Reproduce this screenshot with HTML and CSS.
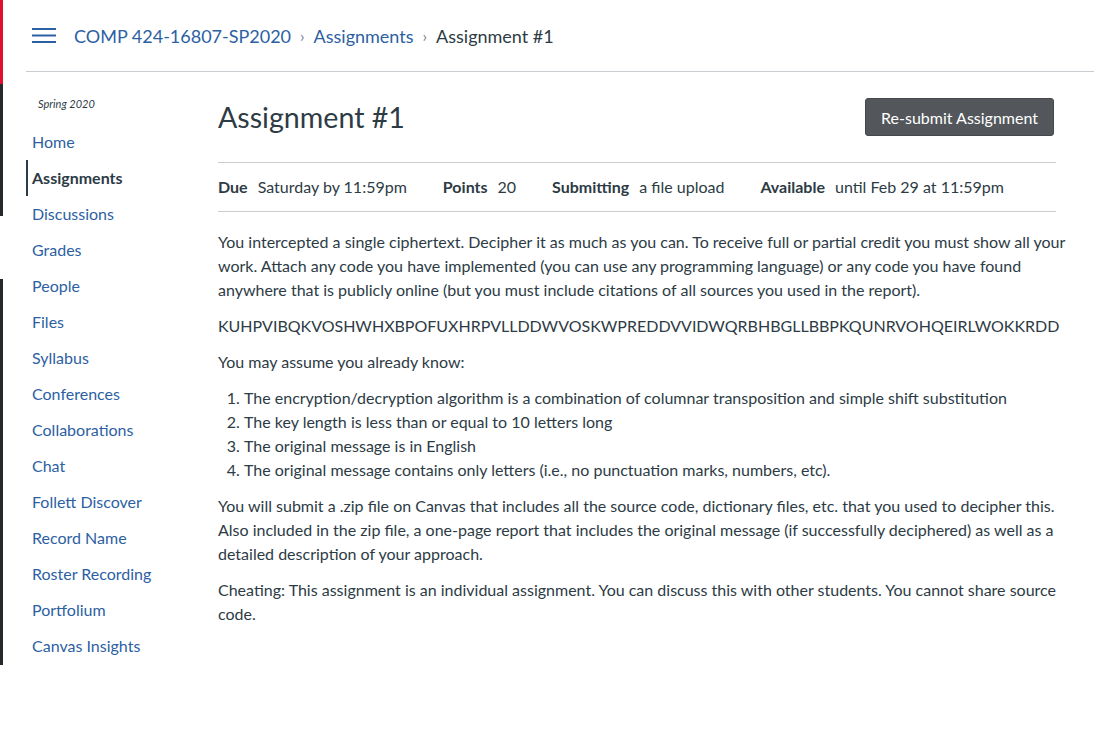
FILE: index.html
```html
<!DOCTYPE html>
<html lang="en">
<head>
<meta charset="utf-8">
<title>Assignment #1</title>
<link rel="stylesheet" href="styles.css">
</head>
<body>
<div class="edge">
  <div class="edge-red"></div>
  <div class="edge-dark edge-a"></div>
  <div class="edge-gap"></div>
  <div class="edge-dark edge-b"></div>
</div>
<div class="app">
  <header class="topbar">
    <svg class="burger" width="24" height="16" viewBox="0 0 24 16">
      <rect x="0" y="0" width="24" height="2" fill="#2d5fa3"/>
      <rect x="0" y="6.5" width="24" height="2" fill="#2d5fa3"/>
      <rect x="0" y="13" width="24" height="2" fill="#2d5fa3"/>
    </svg>
    <nav class="crumbs">
      <a class="crumb-link" href="#">COMP 424-16807-SP2020</a>
      <span class="crumb-sep">›</span>
      <a class="crumb-link" href="#">Assignments</a>
      <span class="crumb-sep">›</span>
      <span class="crumb-current">Assignment #1</span>
    </nav>
  </header>
  <div class="layout">
    <aside class="sidenav">
      <div class="term">Spring 2020</div>
      <ul class="navlist">
        <li><a class="navlink" href="#">Home</a></li>
        <li><a class="navlink active" href="#">Assignments</a></li>
        <li><a class="navlink" href="#">Discussions</a></li>
        <li><a class="navlink" href="#">Grades</a></li>
        <li><a class="navlink" href="#">People</a></li>
        <li><a class="navlink" href="#">Files</a></li>
        <li><a class="navlink" href="#">Syllabus</a></li>
        <li><a class="navlink" href="#">Conferences</a></li>
        <li><a class="navlink" href="#">Collaborations</a></li>
        <li><a class="navlink" href="#">Chat</a></li>
        <li><a class="navlink" href="#">Follett Discover</a></li>
        <li><a class="navlink" href="#">Record Name</a></li>
        <li><a class="navlink" href="#">Roster Recording</a></li>
        <li><a class="navlink" href="#">Portfolium</a></li>
        <li><a class="navlink" href="#">Canvas Insights</a></li>
      </ul>
    </aside>
    <main class="content">
      <div class="title-row">
        <h1 class="title">Assignment #1</h1>
        <button class="btn">Re-submit Assignment</button>
      </div>
      <div class="meta">
        <div class="meta-item"><span class="meta-label">Due</span><span>Saturday by 11:59pm</span></div>
        <div class="meta-item"><span class="meta-label">Points</span><span>20</span></div>
        <div class="meta-item"><span class="meta-label">Submitting</span><span>a file upload</span></div>
        <div class="meta-item"><span class="meta-label">Available</span><span>until Feb 29 at 11:59pm</span></div>
      </div>
      <div class="desc">
        <p>You intercepted a single ciphertext. Decipher it as much as you can. To receive full or partial credit you must show all your work. Attach any code you have implemented (you can use any programming language) or any code you have found anywhere that is publicly online (but you must include citations of all sources you used in the report).</p>
        <p>KUHPVIBQKVOSHWHXBPOFUXHRPVLLDDWVOSKWPREDDVVIDWQRBHBGLLBBPKQUNRVOHQEIRLWOKKRDD</p>
        <p>You may assume you already know:</p>
        <ol class="steps">
          <li>The encryption/decryption algorithm is a combination of columnar transposition and simple shift substitution</li>
          <li>The key length is less than or equal to 10 letters long</li>
          <li>The original message is in English</li>
          <li>The original message contains only letters (i.e., no punctuation marks, numbers, etc).</li>
        </ol>
        <p>You will submit a .zip file on Canvas that includes all the source code, dictionary files, etc. that you used to decipher this. Also included in the zip file, a one-page report that includes the original message (if successfully deciphered) as well as a detailed description of your approach.</p>
        <p>Cheating: This assignment is an individual assignment. You can discuss this with other students. You cannot share source code.</p>
      </div>
    </main>
  </div>
</div>
</body>
</html>
```

FILE: styles.css
```css
* { box-sizing: border-box; }
html, body { margin: 0; padding: 0; background: #fff; }
body {
  display: flex;
  font-family: "Lato", "Open Sans", sans-serif;
  color: #2d3b45;
  min-height: 745px;
}
.edge { width: 3px; flex: none; display: flex; flex-direction: column; }
.edge-red { height: 84px; background: #e0102f; }
.edge-dark { background: #26292c; }
.edge-a { height: 132px; }
.edge-gap { height: 63px; }
.edge-b { height: 386px; }

.app { flex: 1; padding-left: 23px; }
.topbar {
  height: 72px;
  border-bottom: 1px solid #c7cdd1;
  display: flex;
  align-items: center;
  padding-left: 6px;
}
.burger { display: block; margin-right: 18px; }
.crumbs { display: flex; align-items: center; font-size: 18px; }
.crumb-link { color: #2d5fa3; text-decoration: none; }
.crumb-sep { color: #73818c; font-size: 16px; margin: 0 9px; }
.crumb-current { color: #2d3b45; }

.layout { display: flex; }
.sidenav { width: 192px; flex: none; }
.term {
  font-size: 11px;
  font-style: italic;
  padding: 24px 0 0 12px;
  height: 52px;
  line-height: 16px;
}
.navlist { list-style: none; margin: 0; padding: 0; }
.navlink {
  display: block;
  height: 36px;
  line-height: 36px;
  padding-left: 4px;
  font-size: 16px;
  color: #2d5fa3;
  text-decoration: none;
  border-left: 2px solid transparent;
}
.navlink.active { color: #2d3b45; font-weight: 700; border-left-color: #2d3b45; }

.content { width: 838px; flex: none; padding-top: 26px; }
.title-row { display: flex; justify-content: space-between; align-items: center; height: 38px; }
.title { margin: 0; font-size: 28.6px; font-weight: 400; line-height: 38px; }
.btn {
  font-family: inherit;
  font-size: 16px;
  color: #fff;
  background: #53575b;
  border: 1px solid #45484b;
  border-radius: 3px;
  height: 38px;
  padding: 0 15px;
  margin-right: 2px;
}
.meta {
  margin-top: 26px;
  border-top: 1px solid #c7cdd1;
  border-bottom: 1px solid #c7cdd1;
  padding: 12px 0;
  display: flex;
  gap: 36px;
  font-size: 16px;
  line-height: 24px;
}
.meta-label { font-weight: 700; margin-right: 10px; }
.desc { padding-top: 18px; font-size: 16px; line-height: 24px; width: 848px; }
.desc p { margin: 0 0 12px; }
.steps { margin: 0 0 12px; padding-left: 26px; }
```
